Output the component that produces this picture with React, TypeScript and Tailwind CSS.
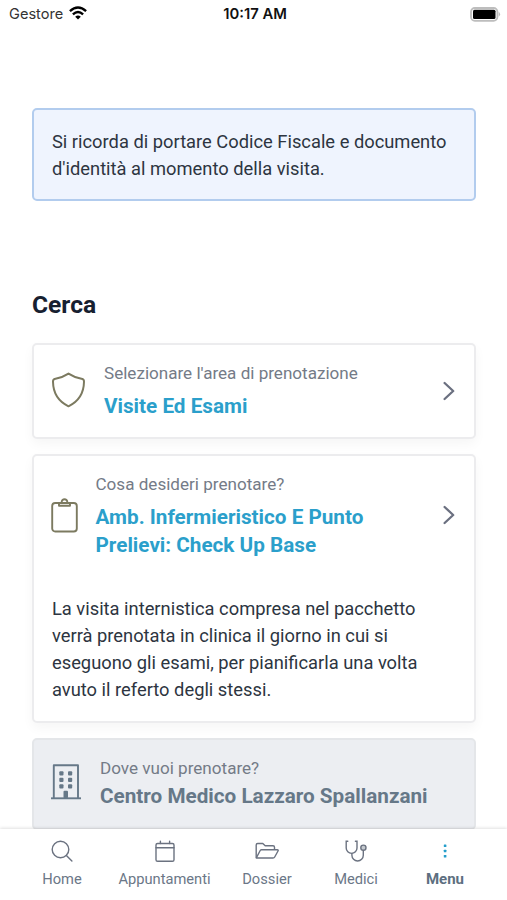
import React from 'react';

interface NavItem {
  label: string;
  icon: React.ReactNode;
  active?: boolean;
  className: string;
}

const ShieldIcon = () => (
  <svg viewBox="0 0 34 36" className="relative -top-px w-[34px] h-9 shrink-0" fill="none" stroke="#7c7a60" strokeWidth="2" strokeLinejoin="round">
    <path d="M16.500 1.600C12 4.600 7.500 6.100 2.600 7C1.200 7.300 1 8.300 1 9.800C1.200 21.500 7.500 30 16.500 34.300C25.500 30 31.800 21.500 32 9.800C32 8.300 31.800 7.300 30.400 7C25.500 6.100 21 4.600 16.500 1.600Z" />
  </svg>
);

const ClipboardIcon = () => (
  <svg viewBox="0 0 27 35" className="relative -left-px w-[27px] h-[35px] shrink-0" fill="none" stroke="#7c7a60" strokeWidth="1.900" strokeLinejoin="round">
    <rect x="1.200" y="5" width="24.600" height="28.500" rx="3" />
    <path d="M8 5V7.700H19V5H16.300V4A2.800 2.800 0 1 0 10.700 4V5Z" />
  </svg>
);

const BuildingIcon = () => (
  <svg viewBox="0 0 30 36" className="relative -left-px w-[30px] h-9 shrink-0" fill="none" stroke="#667888" strokeWidth="1.900">
    <path d="M0 34.300H30" />
    <path d="M2.800 34.300V1.200H27V34.300" strokeLinejoin="round" />
    <g fill="#667888" stroke="none">
      <rect x="8.300" y="7.200" width="4.200" height="4.200" rx="1" />
      <rect x="17" y="7.200" width="4.200" height="4.200" rx="1" />
      <rect x="8.300" y="13.700" width="4.200" height="4.200" rx="1" />
      <rect x="17" y="13.700" width="4.200" height="4.200" rx="1" />
      <rect x="8.300" y="20.200" width="4.200" height="4.200" rx="1" />
      <rect x="17" y="20.200" width="4.200" height="4.200" rx="1" />
      <rect x="12.500" y="26.800" width="4.500" height="7.500" rx="1" />
    </g>
  </svg>
);

const ChevronIcon = () => (
  <svg viewBox="0 0 12 20" className="w-3 h-5 shrink-0" fill="none" stroke="#6b7080" strokeWidth="2.300" strokeLinecap="round" strokeLinejoin="round">
    <path d="M1.600 2L10.200 10L1.600 18" />
  </svg>
);

const navItems: NavItem[] = [
  {
    label: 'Home',
    className: 'w-[72px]',
    icon: (
      <svg viewBox="0 0 24 24" className="w-6 h-6" fill="none" stroke="#6b7280" strokeWidth="1.400" strokeLinecap="round">
        <circle cx="10.500" cy="10.500" r="8.300" />
        <path d="M16.400 16.500L21.900 22" />
      </svg>
    ),
  },
  {
    label: 'Appuntamenti',
    className: 'w-[133px]',
    icon: (
      <svg viewBox="0 0 24 24" className="w-6 h-6" fill="none" stroke="#6b7280" strokeWidth="1.400" strokeLinecap="round">
        <rect x="3" y="4.500" width="18" height="17.800" rx="1.600" />
        <path d="M3 8.700H21M7.400 2.200V4.500M16.600 2.200V4.500" />
      </svg>
    ),
  },
  {
    label: 'Dossier',
    className: 'w-[72px]',
    icon: (
      <svg viewBox="0 0 24 24" className="w-6 h-6" fill="none" stroke="#6b7280" strokeWidth="1.400" strokeLinejoin="round">
        <path d="M1.200 18.700V6Q1.200 4.500 2.700 4.500H7.800L10.200 6.800H18Q19.500 6.800 19.500 8.300V10.700" />
        <path d="M1.300 18.800L5.200 11.500Q5.700 10.700 6.600 10.700H22.200Q23.700 10.700 23 12L19.700 18Q19.200 19 18 19H1.300Z" />
      </svg>
    ),
  },
  {
    label: 'Medici',
    className: 'w-[106px]',
    icon: (
      <svg viewBox="0 0 24 24" className="w-6 h-6" fill="none" stroke="#6b7280" strokeWidth="1.400" strokeLinecap="round">
        <path d="M3.800 2.200H2.200V9A5.400 5.400 0 0 0 13 9V2.200H11.400" />
        <path d="M7.900 14.500V16.300A5.700 5.700 0 0 0 19.300 16.300V11.500" />
        <circle cx="19.400" cy="8.700" r="2.600" fill="#c5cacf" />
      </svg>
    ),
  },
  {
    label: 'Menu',
    active: true,
    className: 'w-[72px]',
    icon: (
      <svg viewBox="0 0 24 24" className="w-6 h-6" fill="#249ecb">
        <rect x="10.800" y="5.500" width="2.600" height="2.600" rx=".6" />
        <rect x="10.800" y="10.700" width="2.600" height="2.600" rx=".6" />
        <rect x="10.800" y="15.900" width="2.600" height="2.600" rx=".6" />
      </svg>
    ),
  },
];

function StatusBar() {
  return (
    <header className="grid grid-cols-3 items-center h-7 pl-[9px] pr-1.5 text-black font-[Inter,sans-serif]">
      <div className="flex items-center gap-1.5 text-[#333]">
        <span className="relative top-px text-[14.600px]">Gestore</span>
        <svg viewBox="0 0 18 14" className="relative -top-px w-[18px] h-[14px]" fill="none" stroke="#000" strokeWidth="2.400">
          <path d="M.9 5.200Q9-2 17.100 5.200" />
          <path d="M3.900 8.300Q9 3.700 14.100 8.300" />
          <path d="M9 13.600L6.200 10.700Q9 8.300 11.800 10.700Z" fill="#000" stroke="none" />
        </svg>
      </div>
      <span className="text-center text-[14.800px] font-semibold whitespace-nowrap text-[#111]">10:17 AM</span>
      <svg viewBox="0 0 31 15" className="relative w-[31px] h-[15px] justify-self-end" fill="none">
        <rect x="1" y="1" width="26.400" height="12.800" rx="3.800" stroke="#bdbdbd" strokeWidth="1.800" />
        <rect x="3" y="2.800" width="22.500" height="9.200" rx="1.500" fill="#000" />
        <path d="M28.700 4.800Q31.500 7.300 28.700 9.800Z" fill="#bdbdbd" />
      </svg>
    </header>
  );
}

export default function App() {
  return (
    <div className="flex flex-col h-[900px] w-[507px] overflow-hidden bg-white font-[Roboto,sans-serif]">
      <StatusBar />

      <main className="flex-1 min-h-0 overflow-hidden pl-8 pr-[31px] pt-[80.400px]">
        <div className="h-[93px] rounded-[5px] border-2 border-[#b2ccee] bg-[#eff4fe] px-[18px] pt-[17.600px] text-[18.320px] leading-[27px] text-[#2d3541]">
          Si ricorda di portare Codice Fiscale e documento<br />d'identità al momento della visita.
        </div>

        <h1 className="mt-[86px] text-[24.600px] leading-9 font-bold text-[#172030]">Cerca</h1>

        <section className="mt-[19.600px] flex items-center h-[96px] rounded-[5px] border-2 border-[#ececee] bg-white pl-[18px] pr-[19px] shadow-[0_5px_12px_rgba(0,0,0,0.04)]">
          <ShieldIcon />
          <div className="ml-[18px] flex-1">
            <p className="text-[17.080px] leading-6 text-[#747b87]">Selezionare l'area di prenotazione</p>
            <p className="mt-[7px] text-[20.700px] leading-7 font-bold text-[#2b9fcb]">Visite Ed Esami</p>
          </div>
          <ChevronIcon />
        </section>

        <section className="mt-[15px] h-[269px] rounded-[5px] border-2 border-[#ececee] bg-white pl-[18px] pr-[19px] pt-4 shadow-[0_5px_12px_rgba(0,0,0,0.04)]">
          <div className="flex items-center">
            <ClipboardIcon />
            <div className="ml-[16.500px] flex-1">
              <p className="text-[17.080px] leading-6 text-[#747b87]">Cosa desideri prenotare?</p>
              <p className="mt-[7px] text-[20.700px] leading-7 font-bold text-[#2b9fcb] whitespace-nowrap">
                Amb. Infermieristico E Punto<br />Prelievi: Check Up Base
              </p>
            </div>
            <ChevronIcon />
          </div>
          <p className="mt-9 text-[18.320px] leading-[27px] text-[#2d3541] whitespace-nowrap">
            La visita internistica compresa nel pacchetto<br />
            verrà prenotata in clinica il giorno in cui si<br />
            eseguono gli esami, per pianificarla una volta<br />
            avuto il referto degli stessi.
          </p>
        </section>

        <section className="mt-[15px] flex items-start h-[92px] rounded-[5px] border-2 border-[#e4e6e9] bg-[#eceef2] px-[18px] pt-4">
          <div className="mt-2">
            <BuildingIcon />
          </div>
          <div className="ml-[18px]">
            <p className="text-[17.080px] leading-6 text-[#747b87]">Dove vuoi prenotare?</p>
            <p className="mt-0.5 text-[20.700px] leading-7 font-bold text-[#667888] whitespace-nowrap">Centro Medico Lazzaro Spallanzani</p>
          </div>
        </section>
      </main>

      <nav className="relative flex h-[71px] shrink-0 bg-white pl-[26px] pt-2.5 shadow-[0_-1px_3px_rgba(0,0,0,0.12)]">
        {navItems.map((item) => (
          <a key={item.label} className={`flex flex-col items-center ${item.className}`}>
            {item.icon}
            <span className={`mt-1.5 leading-5 ${item.active ? 'text-[15px] font-bold text-[#5d6f80]' : 'text-[14.700px] text-[#6b7787]'}`}>{item.label}</span>
          </a>
        ))}
      </nav>
    </div>
  );
}
